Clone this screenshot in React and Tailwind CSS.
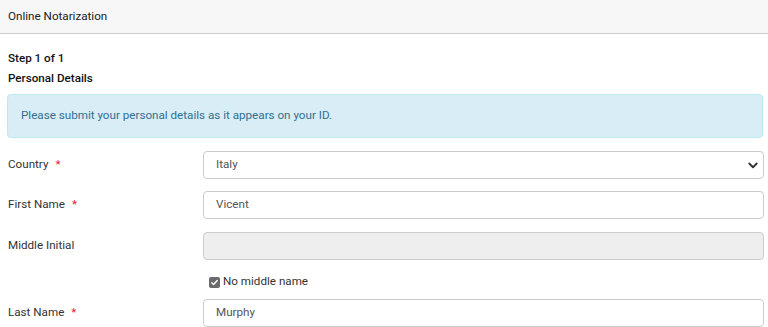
export default function App() {
  const font = { fontFamily: 'Roboto, "Liberation Sans", sans-serif' }

  // one labelled row of the form
  const Row = ({ label, required, children }) => (
    <div className="flex items-center">
      <div className="w-[196px] shrink-0 pl-px text-[11.65px] text-[#333]">
        {label}
        {required && <span className="ml-[7px] text-[#e0202a]">*</span>}
      </div>
      <div className="flex-1">{children}</div>
    </div>
  )

  const inputCls =
    'h-[28px] w-full rounded-[4px] border border-[#ccc] px-[12px] text-[11.65px] text-[#555] flex items-center'

  return (
    <div className="min-h-screen bg-white" style={font}>
      {/* header */}
      <div className="h-[34px] bg-[#f7f7f7] border-b border-[#ccc] flex items-center px-[8px] text-[11.65px] text-[#222]">
        Online Notarization
      </div>

      <div className="pl-[7px] pr-[4px] pt-[14px]">
        <div className="pl-px text-[11.65px] font-medium text-[#111] leading-[20px]">Step 1 of 1</div>
        <div className="pl-px text-[11.65px] font-medium text-[#111] leading-[20px]">Personal Details</div>

        {/* info alert */}
        <div className="mt-[6px] mr-px h-[44px] rounded-[4px] border border-[#bce8f1] bg-[#d9edf7] flex items-center px-[13px] text-[11.65px] text-[#31708f]">
          Please submit your personal details as it appears on your ID.
        </div>

        <div className="mt-[13px] flex flex-col">
          <Row label="Country" required>
            <div className={inputCls + ' bg-white justify-between pr-[4px]'}>
              <span>Italy</span>
              <svg width="12" height="12" viewBox="0 0 16 16" fill="none">
                <path d="M3 6l5 5 5-5" stroke="#333" strokeWidth="2.4" strokeLinecap="round" strokeLinejoin="round" />
              </svg>
            </div>
          </Row>

          <div className="mt-[12px]">
            <Row label="First Name" required>
              <div className={inputCls + ' bg-white'}>Vicent</div>
            </Row>
          </div>

          <div className="mt-[13px]">
            <Row label="Middle Initial">
              <div className={inputCls + ' bg-[#eee]'}></div>
            </Row>
          </div>

          {/* checkbox */}
          <div className="mt-[11px] ml-[202px] flex items-center h-[22px] text-[11.65px] text-[#333]">
            <span className="w-[11px] h-[11px] rounded-[2px] bg-[#6b6b6b] flex items-center justify-center mr-[3px]">
              <svg width="9" height="9" viewBox="0 0 10 10" fill="none">
                <path d="M2 5.2l2 2 4-4.4" stroke="white" strokeWidth="1.6" strokeLinecap="round" strokeLinejoin="round" />
              </svg>
            </span>
            No middle name
          </div>

          <div className="mt-[6px]">
            <Row label="Last Name" required>
              <div className={inputCls + ' bg-white'}>Murphy</div>
            </Row>
          </div>
        </div>
      </div>
    </div>
  )
}
